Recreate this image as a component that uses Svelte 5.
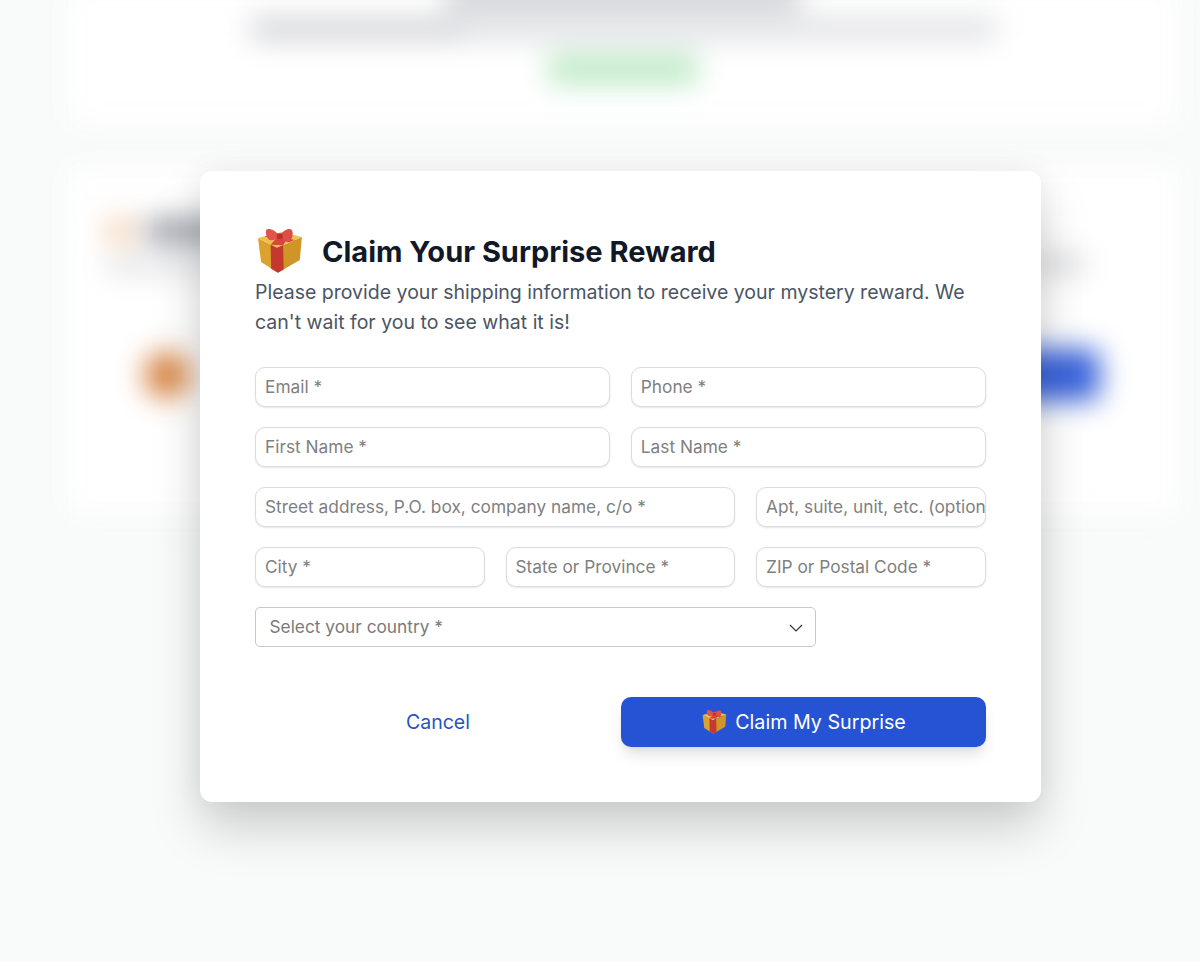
<script lang="ts">
    const rows = [
        [{ ph: "Email *", span: 3 }, { ph: "Phone *", span: 3 }],
        [{ ph: "First Name *", span: 3 }, { ph: "Last Name *", span: 3 }],
        [{ ph: "Street address, P.O. box, company name, c/o *", span: 4 }, { ph: "Apt, suite, unit, etc. (optional)", span: 2 }],
        [{ ph: "City *", span: 2 }, { ph: "State or Province *", span: 2 }, { ph: "ZIP or Postal Code *", span: 2 }],
    ];
</script>

{#snippet gift(size: number)}
    <svg class="gift" width={size} height={size} viewBox="0 0 48 48" aria-hidden="true">
        <path d="M2.9 10.6 L21 20 L22 44 L5.8 33.6 Z" fill="#dba32e" />
        <path d="M21 20 L45 9.6 L43 31.7 L22 44 Z" fill="#cf9526" />
        <path d="M2.9 10.6 L26 4.8 L45 9.6 L21 20 Z" fill="#efc052" />
        <path d="M15 17 L21 20 L27 17.4 L27.5 40.7 L22 44 L15.5 40 Z" fill="#c4382f" />
        <path d="M15 17 L27 17.4 L31 11 L23 8 Z" fill="#d6463c" />
        <path d="M9 9 L15 7.5 L38 12.4 L32.5 14.6 Z" fill="#d6463c" />
        <path d="M23 8.5 C20 3 13.5 0.5 11 2.5 C9.5 5 11 11 14 12.5 C17 13.5 21 11.5 23 9.5 Z" fill="#e0544c" />
        <path d="M24 8.5 C27 3 33 0.5 35.5 3 C37 6 36 11.5 33 13.5 C30 14.5 26 12 24 9.5 Z" fill="#dc4f47" />
        <path d="M21 6.5 C22.5 5.8 25 5.8 26.5 6.5 L26.5 11 C25 11.8 22.5 11.8 21 11 Z" fill="#b93229" />
    </svg>
{/snippet}

<div class="page">
    <div class="backdrop" aria-hidden="true">
        <section class="bg-card bg-card--top">
            <div class="bar bar--head"></div>
            <div class="bar--sub">
                <span class="bar bar--sub-a"></span>
                <span class="bar bar--sub-b"></span>
            </div>
            <div class="bar bar--green"></div>
        </section>
        <section class="bg-card bg-card--main">
            <div class="bg-head">
                <div>
                    <div class="bg-title"><span class="bg-icon"></span><span class="bar bar--title"></span></div>
                    <div class="bar bar--line"></div>
                </div>
                <div class="bar bar--side"></div>
            </div>
            <div class="bg-row">
                <span class="bg-avatar"></span>
                <span class="bg-button"></span>
            </div>
        </section>
    </div>

    <div class="modal" role="dialog" aria-labelledby="claim-title">
        <h2 id="claim-title">{@render gift(50)}<span>Claim Your Surprise Reward</span></h2>
        <p>Please provide your shipping information to receive your mystery reward. We can't wait for you to see what it is!</p>

        <form class="fields">
            {#each rows as row}
                {#each row as field}
                    <input class={"span-" + field.span} type="text" placeholder={field.ph} />
                {/each}
            {/each}
            <div class="country">
                <select>
                    <option>Select your country *</option>
                </select>
                <svg class="chevron" width="14" height="8" viewBox="0 0 14 8" aria-hidden="true">
                    <path d="M1 1 L7 7 L13 1" fill="none" stroke="#333" stroke-width="1.2" />
                </svg>
            </div>
        </form>

        <div class="actions">
            <button class="cancel" type="button">Cancel</button>
            <button class="claim" type="button">{@render gift(27)}<span>Claim My Surprise</span></button>
        </div>
    </div>
</div>

<style>
    :global(body) {
        margin: 0;
        background: #f9fafa;
        font-family: Inter, "Liberation Sans", sans-serif;
    }
    .page {
        position: relative;
        height: 962px;
        overflow: hidden;
        padding-top: 171px;
        padding-left: 200px;
        box-sizing: border-box;
    }

    .backdrop {
        position: absolute;
        inset: -12px 0 0 0;
        padding: 0 20px 0 66px;
        display: flex;
        flex-direction: column;
        gap: 40px;
        filter: blur(14px);
    }
    .bg-card {
        background: #fff;
        box-shadow: 0 0 16px rgba(0, 0, 0, 0.03);
    }
    .bg-card--top {
        height: 137px;
        display: flex;
        flex-direction: column;
        align-items: center;
    }
    .bar {
        display: block;
        border-radius: 4px;
    }
    .bar--head {
        width: 355px;
        height: 20px;
        background: #c4c5ca;
    }
    .bar--sub {
        display: flex;
        width: 745px;
        margin-top: 10px;
    }
    .bar--sub-a {
        width: 215px;
        height: 22px;
        background: #d2d3d8;
    }
    .bar--sub-b {
        flex: 1;
        height: 22px;
        background: #dfe0e4;
    }
    .bar--green {
        width: 150px;
        height: 30px;
        margin-top: 14px;
        background: #bdeac6;
    }
    .bg-card--main {
        height: 350px;
        padding: 52px 80px 0 40px;
        box-sizing: border-box;
    }
    .bg-head {
        display: flex;
        justify-content: space-between;
        align-items: flex-end;
    }
    .bg-title {
        display: flex;
        gap: 12px;
        align-items: center;
    }
    .bg-icon {
        width: 28px;
        height: 28px;
        background: #f5d5b8;
        border-radius: 6px;
    }
    .bar--title {
        width: 200px;
        height: 24px;
        background: #999ca5;
    }
    .bar--line {
        width: 260px;
        height: 10px;
        margin-top: 16px;
        background: #cfd1d6;
    }
    .bar--side {
        width: 56px;
        height: 14px;
        margin-right: 15px;
        background: #cfd0d3;
    }
    .bg-row {
        display: flex;
        justify-content: space-between;
        align-items: center;
        margin-top: 78px;
        padding-left: 38px;
    }
    .bg-avatar {
        width: 46px;
        height: 46px;
        border-radius: 50%;
        background: #d5803c;
    }
    .bg-button {
        width: 150px;
        height: 52px;
        border-radius: 10px;
        background: #3862da;
    }

    .modal {
        position: relative;
        width: 841px;
        height: 631px;
        box-sizing: border-box;
        padding: 55px 55px 0;
        background: #fff;
        border-radius: 12px;
        box-shadow: 0 26px 50px rgba(0, 0, 0, 0.18), 0 0 30px rgba(0, 0, 0, 0.05);
    }
    h2 {
        display: flex;
        align-items: center;
        gap: 17px;
        margin: 0;
        height: 51px;
        font-size: 29px;
        font-weight: 700;
        color: #111827;
    }
    p {
        margin: 0;
        font-size: 19.5px;
        line-height: 30px;
        color: #4b5563;
    }
    .gift {
        flex: none;
    }
    .fields {
        display: grid;
        grid-template-columns: repeat(6, 1fr);
        gap: 20px 20.6px;
        margin-top: 30px;
    }
    input {
        min-width: 0;
        height: 40px;
        box-sizing: border-box;
        padding: 0 0 2px 9px;
        border: 1.5px solid #dcdcdc;
        border-radius: 10px;
        background: #fff;
        box-shadow: 0 1px 2px rgba(0, 0, 0, 0.1);
        font: 400 17.3px Inter, "Liberation Sans", sans-serif;
        color: #111827;
    }
    input::placeholder {
        color: #808080;
        opacity: 1;
    }
    .span-2 {
        grid-column: span 2;
    }
    .span-3 {
        grid-column: span 3;
    }
    .span-4 {
        grid-column: span 4;
    }
    .country {
        grid-column: 1 / -1;
        position: relative;
        width: 561px;
    }
    select {
        width: 100%;
        height: 40px;
        display: block;
        box-sizing: border-box;
        padding: 0 13.5px 2px;
        appearance: none;
        border: 1.5px solid #c8c8c8;
        border-radius: 5px;
        background: #fff;
        font: 400 17.3px Inter, "Liberation Sans", sans-serif;
        color: #7a7a7a;
    }
    .chevron {
        position: absolute;
        right: 13px;
        top: 17px;
    }
    .actions {
        display: flex;
        margin-top: 50px;
        height: 50px;
    }
    .actions button {
        border: none;
        font: 400 19.5px Inter, "Liberation Sans", sans-serif;
        cursor: pointer;
    }
    .cancel {
        width: 366px;
        background: transparent;
        color: #2653c4;
    }
    .actions .claim {
        width: 365px;
        display: flex;
        align-items: center;
        justify-content: center;
        gap: 7px;
        border-radius: 10px;
        background: #2653d4;
        color: #fff;
        font-size: 19.7px;
        box-shadow: 0 10px 15px -3px rgba(0, 0, 0, 0.12), 0 4px 6px -4px rgba(0, 0, 0, 0.1);
    }
</style>
